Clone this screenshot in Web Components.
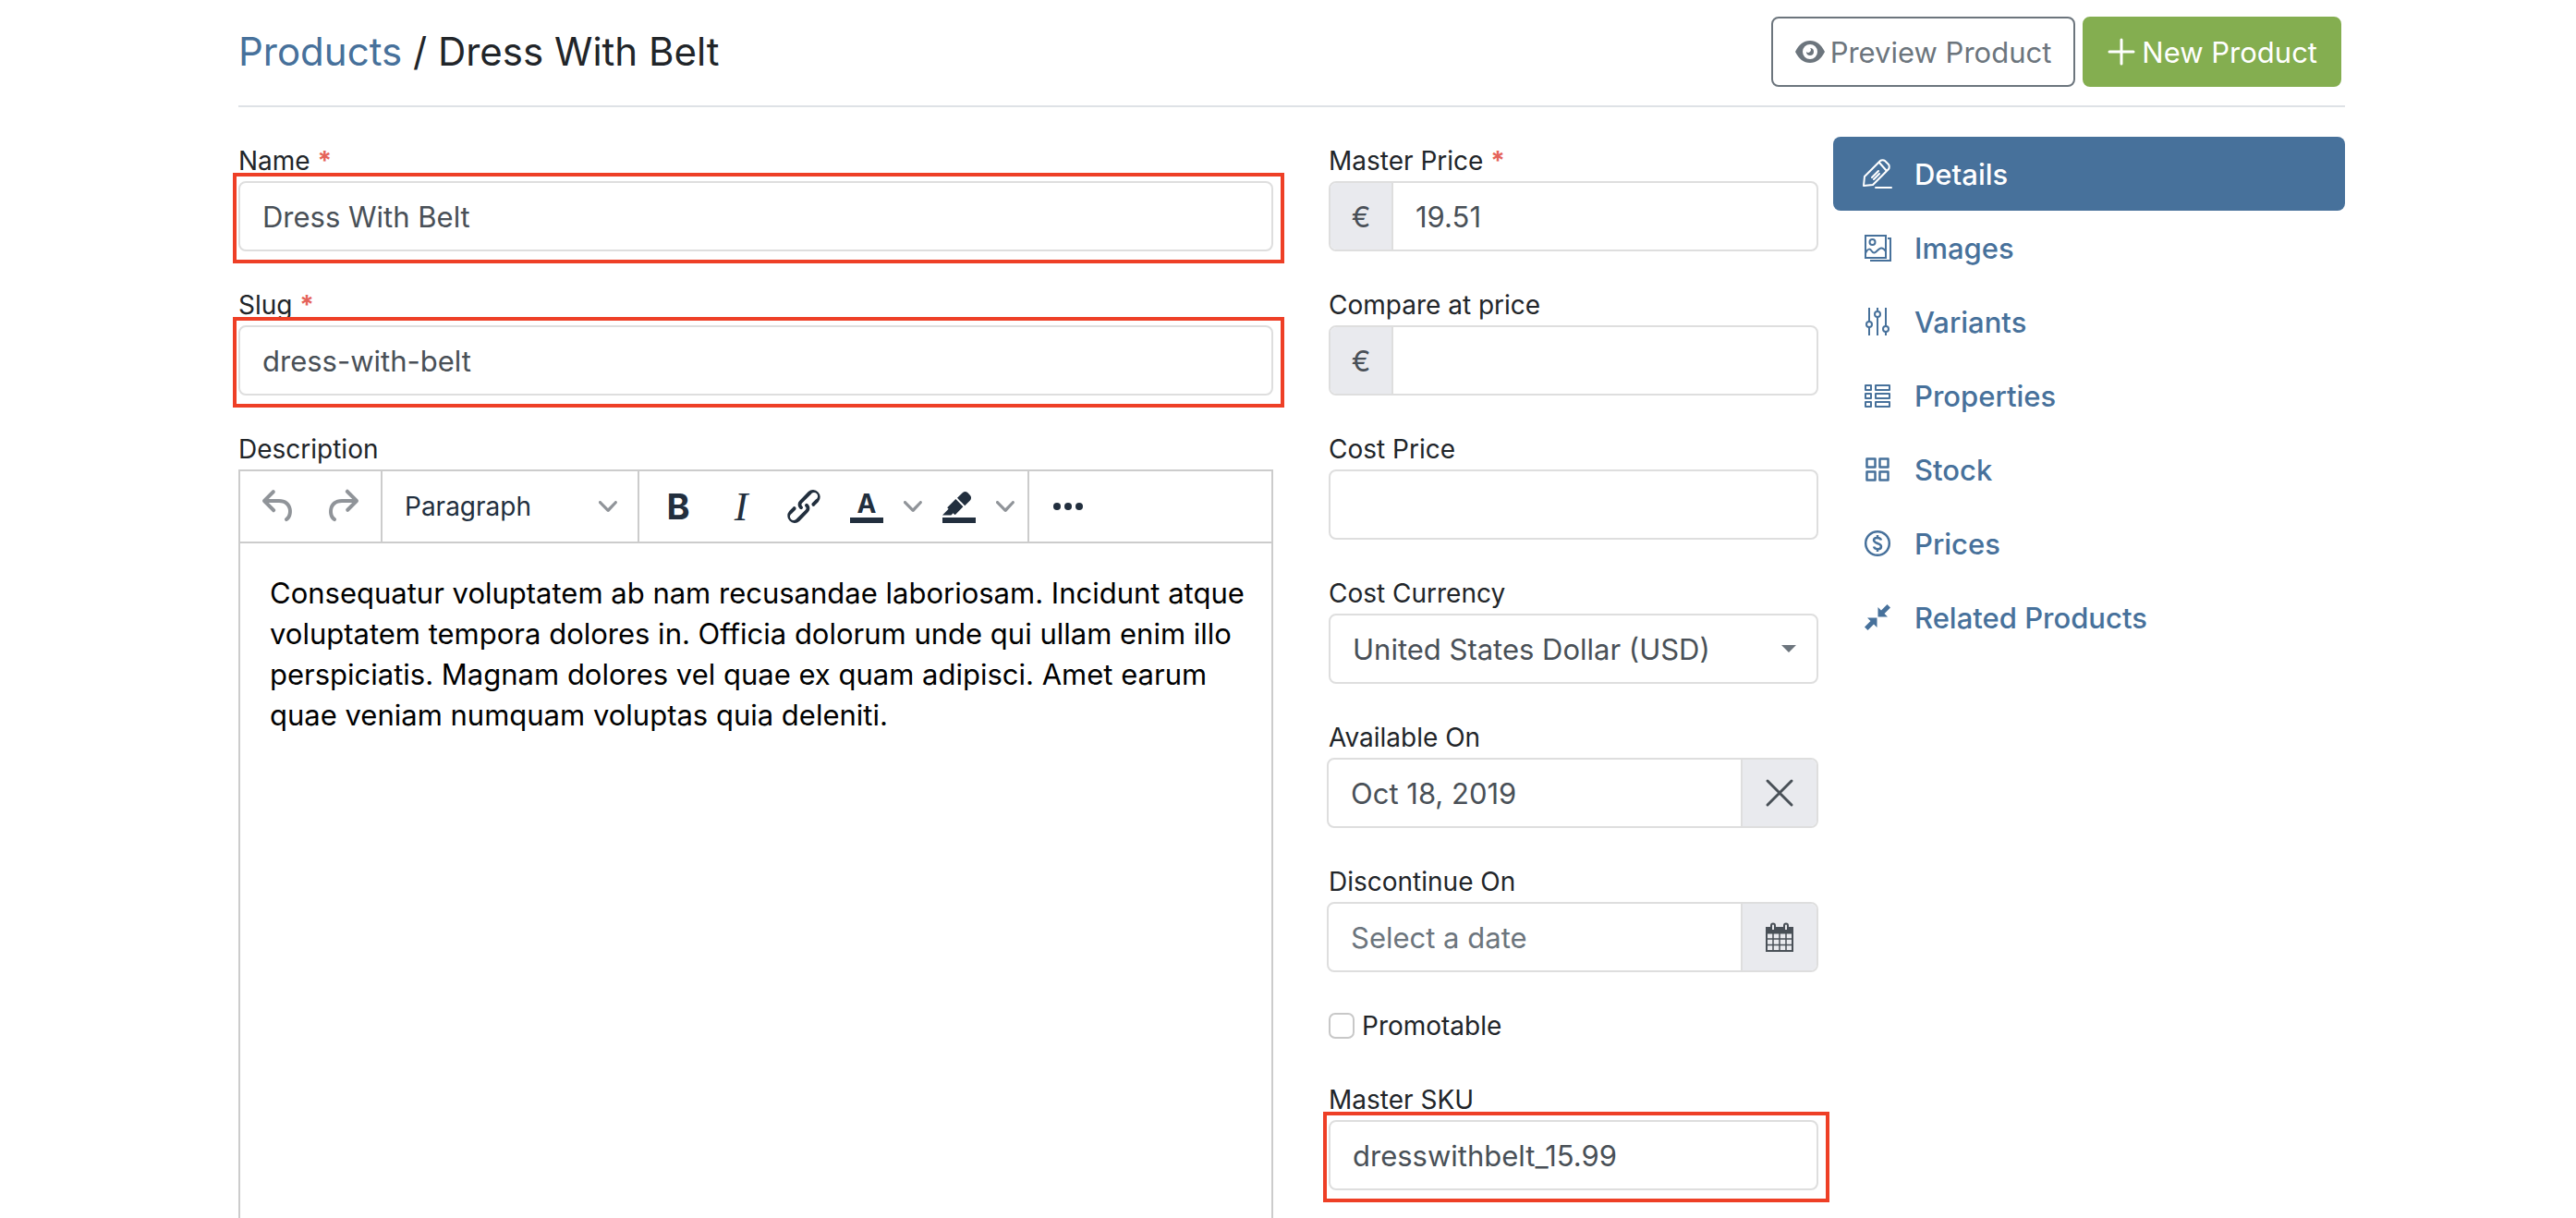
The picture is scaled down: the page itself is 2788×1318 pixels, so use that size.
<!DOCTYPE html>
<html lang="en">
<head>
<meta charset="utf-8">
<title>Dress With Belt</title>
<style>
  html, body { margin: 0; background: #fff; }
  body {
    font-family: Inter, "Noto Sans", sans-serif;
    font-size: 32px;
    color: #212529;
    --line: #dedede;
    --blue: #47719b;
    --ink: #495057;
    --label: 28px;
    --text: 31px;
    overflow: hidden;
  }
</style>
</head>
<body>
<product-page></product-page>
<script>
const define = (name, build) => customElements.define(name, class extends HTMLElement {
  connectedCallback() {
    if (this.shadowRoot) return;
    this.attachShadow({ mode: "open" }).innerHTML = build(this);
  }
});

const ICONS = {
  eye: '<path fill-rule="evenodd" d="M0 16C4 8 9 4 16 4s12 4 16 12c-4 8-9 12-16 12S4 24 0 16zM16 8a8 8 0 1 0 0 16 8 8 0 0 0 0-16zm0 4a4 4 0 1 1-4 4 2.5 2.5 0 0 0 4-4z"/>',
  plus: '<path d="M16 3v26M3 16h26" fill="none" stroke="currentColor" stroke-width="3" stroke-linecap="round"/>',
  details: '<g fill="none" stroke="currentColor" stroke-width="2" stroke-linejoin="round" stroke-linecap="round"><path d="M1 29l1-10L19 2c1-1 4-1 5 0l4 4c1 1 1 4 0 5L11 28zM18 4l8 9M10 20l7-7M12 22l6-6"/><path d="M14 31h17"/></g>',
  images: '<g fill="none" stroke="currentColor" stroke-width="2"><path d="M3 3h22v24H3zM27 6h3v24H8"/><circle cx="10.5" cy="10" r="3"/><path d="M3 22c3-6 5-5 7-2s4 1 6-1 5-5 9 1"/></g>',
  variants: '<g fill="none" stroke="currentColor" stroke-width="2"><path d="M7 1v15m0 6v9M16 1v3m0 6v21M25 1v20m0 6v4"/><circle cx="7" cy="19" r="3"/><circle cx="16" cy="8" r="3"/><circle cx="25" cy="24" r="3"/></g>',
  properties: '<g fill="none" stroke="currentColor" stroke-width="2" stroke-linejoin="round"><path d="M3 5h6v5H3zM14 5h15v5H14zM3 14h6v5H3zM14 14h15v5H14zM3 23h6v5H3zM14 23h15v5H14z"/></g>',
  stock: '<g fill="none" stroke="currentColor" stroke-width="2.5" stroke-linejoin="round"><path d="M4.500 4.500h9v9h-9zM18.500 4.500h9v9h-9zM4.500 18.500h9v9h-9zM18.500 18.500h9v9h-9z"/></g>',
  prices: '<g fill="none" stroke="currentColor" stroke-width="2.5"><circle cx="16" cy="16" r="12.8"/><path d="M20 12.500c-1-3.500-8-3.500-8 0 0 4 8 3 8 7 0 3.500-7 3.500-8 0M16 7v3m0 12v3"/></g>',
  related: '<path d="M16.500 15.500V5l3.500 3.500L26.500 2 30 5.500 23.500 12l3.500 3.500zM15.500 16.500V27L12 23.500 5.500 30 2 26.500 8.500 20 5 16.500z"/>',
  close: '<path d="M3 3l26 26M29 3L3 29" fill="none" stroke="currentColor" stroke-width="3" stroke-linecap="round"/>',
  calendar: '<g stroke="currentColor"><path d="M2 6h28v6H2z"/><path fill="none" stroke-width="2" d="M2 6h28v25H2z"/><path fill="none" stroke-width="1.5" d="M9 12v19M16 12v19M23 12v19M2 18h28M2 24.500h28"/><path fill="#e9eaee" stroke-width="2" d="M7 9V3.500a2 2 0 0 1 4 0V9zM21 9V3.500a2 2 0 0 1 4 0V9z"/></g>'
};
const icon = name => `<svg class="icon" viewBox="0 0 32 32" width="32" height="32" fill="currentColor" aria-hidden="true">${ICONS[name]}</svg>`;

define("page-header", () => `
<style>
  :host { display: flex; justify-content: space-between; align-items: center;
          padding: 18px 4px 20px 0; border-bottom: 2px solid #dee2e6; }
  h1 { margin: 0; font-size: 42px; font-weight: 400; line-height: 56px; color: #212529; }
  a { color: var(--blue); text-decoration: none; }
  .actions { display: flex; gap: 8px; }
  button { display: flex; align-items: center; gap: 6px; height: 76px; padding: 0 24px; box-sizing: border-box;
           font: inherit; font-size: var(--text); border-radius: 8px; border: 2px solid #6c757d; background: #fff; color: #6c757d; }
  .new { background: #84ae50; border-color: #84ae50; color: #fff; }
</style>
<h1><a href="#products">Products</a> / Dress With Belt</h1>
<div class="actions">
  <button type="button">${icon("eye")}Preview Product</button>
  <button type="button" class="new">${icon("plus")}New Product</button>
</div>`);

define("form-field", el => {
  const a = n => el.getAttribute(n);
  const prefix = a("prefix") ? `<span class="addon">${a("prefix")}</span>` : "";
  const action = a("action") ? `<button type="button" class="addon act" aria-label="${a("action")}">${icon(a("action"))}</button>` : "";
  const control = a("option")
    ? `<select id="c"><option>${a("option")}</option></select><svg class="caret" viewBox="0 0 16 8" width="16" height="8" aria-hidden="true"><path d="M0 0h16L8 8z"/></svg>`
    : `<input id="c" type="text" value="${a("value") || ""}" placeholder="${a("placeholder") || ""}">`;
  return `
<style>
  :host { display: block; }
  label { display: block; font-size: var(--label); line-height: 32px; padding-bottom: 6px; }
  .req { color: #e5635a; font-weight: 700; }
  .box { position: relative; display: flex; height: 76px; box-sizing: border-box; border: 2px solid var(--line); border-radius: 8px; background: #fff; }
  :host([action]) .box { margin-left: -2px; }
  input, select { flex: 1; min-width: 0; width: 100%; border: 0; outline: 0; margin: 0; padding: 0 24px; background: transparent;
                  font: inherit; font-size: var(--text); color: var(--ink); border-radius: 8px; appearance: none; }
  input::placeholder { color: #6c757d; opacity: 1; }
  .addon { display: flex; align-items: center; justify-content: center; width: 68px; flex: none; background: #e9eaee; color: var(--ink);
           border: 0; border-right: 2px solid var(--line); border-radius: 6px 0 0 6px; font: inherit; font-size: var(--text); padding: 0; box-sizing: border-box; }
  .act { width: 82px; border-right: 0; border-left: 2px solid var(--line); border-radius: 0 6px 6px 0; }
  .caret { align-self: center; flex: none; margin-right: 22px; fill: #6c757d; }
  :host([framed]) .box::after { content: ""; position: absolute; inset: -11px -14px -15px -8px; border: 4px solid #ee3f26; pointer-events: none; }
</style>
<label for="c">${a("label")}${el.hasAttribute("required") ? ' <span class="req">*</span>' : ""}</label>
<div class="box">${prefix}${control}${action}</div>`;
});

define("check-field", el => `
<style>
  :host { display: block; }
  label { display: flex; align-items: center; gap: 8px; font-size: var(--label); line-height: 32px; padding-bottom: 6px; }
  input { appearance: none; width: 28px; height: 28px; margin: 0; border: 2px solid #c8c8c8; border-radius: 7px; background: #fff; box-sizing: border-box; }
</style>
<label><input type="checkbox"><span>${el.getAttribute("label")}</span></label>`);

define("rich-editor", el => {
  const svg = d => `<svg viewBox="0 0 24 24" width="48" height="48" fill="currentColor" aria-hidden="true">${d}</svg>`;
  const chev = '<svg class="chev" viewBox="0 0 10 10" width="20" height="20" aria-hidden="true"><path d="M8.7 2.2c.3-.3.8-.3 1 0 .4.4.4.9 0 1.2L5.7 7.8c-.3.3-.9.3-1.2 0L.2 3.4a.8.8 0 0 1 0-1.2c.3-.3.8-.3 1.1 0L5 6l3.7-3.8Z"/></svg>';
  return `
<style>
  :host { display: flex; flex-direction: column; flex: 1; }
  .label { font-size: var(--label); line-height: 32px; padding-bottom: 6px; }
  .frame { border: 2px solid #ccc; flex: 1; }
  .bar { display: flex; height: 76px; border-bottom: 2px solid #ccc; color: #222f3e; }
  .group { display: flex; align-items: center; padding: 0 8px; border-right: 2px solid #ccc; }
  .group:last-child { border: 0; }
  button { display: flex; align-items: center; justify-content: center; width: 68px; height: 68px; padding: 0; border: 0; background: none; color: inherit; font: inherit; }
  button:disabled { color: #909499; }
  .drop { width: 32px; }
  .chev { fill: #909499; flex: none; }
  .pick { display: flex; align-items: center; width: 260px; box-sizing: border-box; padding: 0 14px 0 16px; }
  select { appearance: none; flex: 1; min-width: 0; border: 0; background: none; padding: 0; font: inherit; font-size: var(--label); color: inherit; }
  .b { font-size: 38px; font-weight: 700; }
  .i { font-family: "Liberation Serif", serif; font-style: italic; font-size: 44px; }
  svg text { font: 700 14px Inter, sans-serif; text-anchor: middle; }
  .body { padding: 32px 20px 32px 32px; color: #000; font-size: var(--text); line-height: 44px; }
</style>
<div class="label" id="l">Description</div>
<div class="frame">
  <div class="bar" role="toolbar">
    <div class="group">
      <button type="button" disabled aria-label="Undo">${svg('<path d="M6.4 8H12c3.7 0 6.2 2 6.8 5.1.6 2.7-.4 5.6-2.3 6.8a1 1 0 0 1-1-1.8c1.1-.6 1.8-2.7 1.4-4.6-.5-2.1-2.1-3.5-4.9-3.5H6.4l3.3 3.3a1 1 0 1 1-1.4 1.4l-5-5a1 1 0 0 1 0-1.4l5-5a1 1 0 0 1 1.4 1.4L6.4 8Z"/>')}</button>
      <button type="button" disabled aria-label="Redo">${svg('<path d="M17.6 10H12c-2.8 0-4.4 1.4-4.9 3.5-.4 2 .3 4 1.4 4.6a1 1 0 1 1-1 1.8c-2-1.2-2.9-4.1-2.3-6.8.6-3 3-5.1 6.8-5.1h5.6l-3.3-3.3a1 1 0 1 1 1.4-1.4l5 5a1 1 0 0 1 0 1.4l-5 5a1 1 0 0 1-1.4-1.4l3.3-3.3Z"/>')}</button>
    </div>
    <div class="group"><div class="pick"><select aria-label="Block format"><option>Paragraph</option></select>${chev}</div></div>
    <div class="group">
      <button type="button" class="b">B</button>
      <button type="button" class="i">I</button>
      <button type="button" aria-label="Link">${svg('<path d="M6.2 12.3a1 1 0 0 1 1.4 1.4l-2 2a2 2 0 1 0 2.6 2.8l4.8-4.8a1 1 0 0 0 0-1.4 1 1 0 1 1 1.4-1.3 2.9 2.9 0 0 1 0 4L9.6 20a3.9 3.9 0 0 1-5.5-5.5l2-2Zm11.6-.6a1 1 0 0 1-1.4-1.4l2-2a2 2 0 1 0-2.6-2.8L11 10.3a1 1 0 0 0 0 1.4A1 1 0 1 1 9.6 13a2.9 2.9 0 0 1 0-4L14.4 4a3.9 3.9 0 0 1 5.5 5.5l-2 2Z"/>')}</button>
      <button type="button" aria-label="Text color">${svg('<path d="M3 18h18v3H3z"/><text x="12" y="15.5">A</text>')}</button>
      <button type="button" class="drop" aria-label="Text colors">${chev}</button>
      <button type="button" aria-label="Highlight">${svg('<path d="M3 18h18v3H3zM7.7 16.7H3l3.3-3.3-.7-.8L10.2 8l4 4.1-4 4.2c-.2.2-.6.2-.8 0l-.6-.7-1.1 1.1zm5-7.5L11 7.4l3-2.9a2 2 0 0 1 2.6 0L18 6c.7.7.7 2 0 2.7l-2.9 2.9-1.8-1.8-.5-.6"/>')}</button>
      <button type="button" class="drop" aria-label="Highlight colors">${chev}</button>
    </div>
    <div class="group"><button type="button" aria-label="More">${svg('<circle cx="6" cy="12" r="2"/><circle cx="12" cy="12" r="2"/><circle cx="18" cy="12" r="2"/>')}</button></div>
  </div>
  <div class="body" contenteditable="true" role="textbox" aria-labelledby="l" spellcheck="false"><slot></slot></div>
</div>`;
});

define("nav-item", el => `
<style>
  :host { display: block; }
  a { display: flex; align-items: center; gap: 24px; height: 80px; padding: 0 32px; border-radius: 8px;
      color: var(--blue); text-decoration: none; font-size: var(--text); font-weight: 500; }
  :host([active]) a { background: var(--blue); color: #fff; }
</style>
<a href="#${el.getAttribute("icon")}">${icon(el.getAttribute("icon"))}<span><slot></slot></span></a>`);

define("product-page", () => `
<style>
  :host { display: block; padding: 0 250px 0 258px; }
  main { display: grid; grid-template-columns: 1710fr 554fr; gap: 16px; padding-top: 32px; }
  form { display: grid; grid-template-columns: 1120fr 530fr; gap: 60px; padding-top: 10px; }
  .col { display: flex; flex-direction: column; gap: 42px; min-width: 0; }
  .main { min-height: 1240px; }
</style>
<page-header></page-header>
<main>
  <form>
    <div class="col main">
      <form-field label="Name" value="Dress With Belt" required framed></form-field>
      <form-field label="Slug" value="dress-with-belt" required framed></form-field>
      <rich-editor>Consequatur voluptatem ab nam recusandae laboriosam. Incidunt atque voluptatem tempora dolores in. Officia dolorum unde qui ullam enim illo perspiciatis. Magnam dolores vel quae ex quam adipisci. Amet earum quae veniam numquam voluptas quia deleniti.</rich-editor>
    </div>
    <div class="col">
      <form-field label="Master Price" value="19.51" prefix="€" required></form-field>
      <form-field label="Compare at price" prefix="€"></form-field>
      <form-field label="Cost Price"></form-field>
      <form-field label="Cost Currency" option="United States Dollar (USD)"></form-field>
      <form-field label="Available On" value="Oct 18, 2019" action="close"></form-field>
      <form-field label="Discontinue On" placeholder="Select a date" action="calendar"></form-field>
      <check-field label="Promotable"></check-field>
      <form-field label="Master SKU" value="dresswithbelt_15.99" framed></form-field>
    </div>
  </form>
  <nav>
    <nav-item icon="details" active>Details</nav-item>
    <nav-item icon="images">Images</nav-item>
    <nav-item icon="variants">Variants</nav-item>
    <nav-item icon="properties">Properties</nav-item>
    <nav-item icon="stock">Stock</nav-item>
    <nav-item icon="prices">Prices</nav-item>
    <nav-item icon="related">Related Products</nav-item>
  </nav>
</main>`);
</script>
</body>
</html>
